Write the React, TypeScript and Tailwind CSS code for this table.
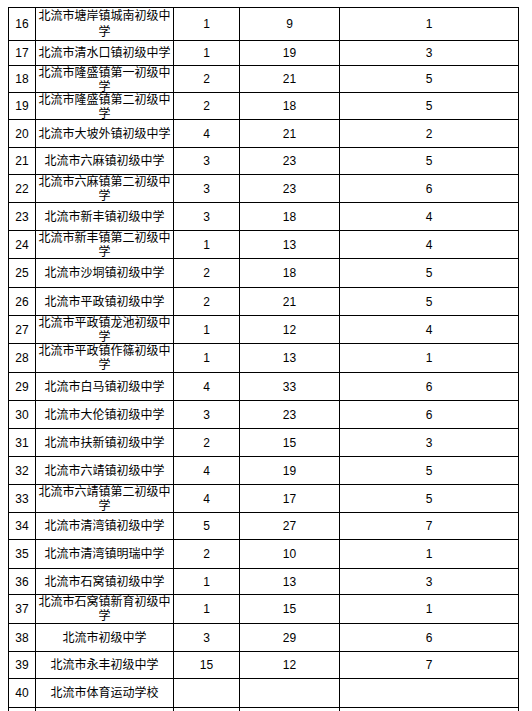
type Row = {
  no: number;
  name: string;
  a: string;
  b: string;
  c: string;
  h: number;
};

// 行高按截图里的横线位置量出来（含上边框 1px）
const ROWS: Row[] = [
  { no: 16, name: "北流市塘岸镇城南初级中学", a: "1", b: "9", c: "1", h: 33 },
  { no: 17, name: "北流市清水口镇初级中学", a: "1", b: "19", c: "3", h: 25 },
  { no: 18, name: "北流市隆盛镇第一初级中学", a: "2", b: "21", c: "5", h: 27 },
  { no: 19, name: "北流市隆盛镇第二初级中学", a: "2", b: "18", c: "5", h: 27 },
  { no: 20, name: "北流市大坡外镇初级中学", a: "4", b: "21", c: "2", h: 28 },
  { no: 21, name: "北流市六麻镇初级中学", a: "3", b: "23", c: "5", h: 27 },
  { no: 22, name: "北流市六麻镇第二初级中学", a: "3", b: "23", c: "6", h: 28 },
  { no: 23, name: "北流市新丰镇初级中学", a: "3", b: "18", c: "4", h: 28 },
  { no: 24, name: "北流市新丰镇第二初级中学", a: "1", b: "13", c: "4", h: 28 },
  { no: 25, name: "北流市沙垌镇初级中学", a: "2", b: "18", c: "5", h: 29 },
  { no: 26, name: "北流市平政镇初级中学", a: "2", b: "21", c: "5", h: 28 },
  { no: 27, name: "北流市平政镇龙池初级中学", a: "1", b: "12", c: "4", h: 28 },
  { no: 28, name: "北流市平政镇作篠初级中学", a: "1", b: "13", c: "1", h: 29 },
  { no: 29, name: "北流市白马镇初级中学", a: "4", b: "33", c: "6", h: 28 },
  { no: 30, name: "北流市大伦镇初级中学", a: "3", b: "23", c: "6", h: 28 },
  { no: 31, name: "北流市扶新镇初级中学", a: "2", b: "15", c: "3", h: 28 },
  { no: 32, name: "北流市六靖镇初级中学", a: "4", b: "19", c: "5", h: 28 },
  { no: 33, name: "北流市六靖镇第二初级中学", a: "4", b: "17", c: "5", h: 28 },
  { no: 34, name: "北流市清湾镇初级中学", a: "5", b: "27", c: "7", h: 27 },
  { no: 35, name: "北流市清湾镇明瑞中学", a: "2", b: "10", c: "1", h: 29 },
  { no: 36, name: "北流市石窝镇初级中学", a: "1", b: "13", c: "3", h: 26 },
  { no: 37, name: "北流市石窝镇新育初级中学", a: "1", b: "15", c: "1", h: 29 },
  { no: 38, name: "北流市初级中学", a: "3", b: "29", c: "6", h: 28 },
  { no: 39, name: "北流市永丰初级中学", a: "15", b: "12", c: "7", h: 27 },
  { no: 40, name: "北流市体育运动学校", a: "", b: "", c: "", h: 29 },
];

const GRID = "grid grid-cols-[27px_138px_66px_100px_179px] border-t border-l border-black";
const CELL = "flex items-center justify-center border-r border-black overflow-hidden";

function NameCell({ name, first }: { name: string; first: boolean }) {
  // 超过 11 个字会折行，Excel 里第二行字挤在格子底部
  const wraps = name.length > 11;
  if (!wraps) return <div className={CELL}>{name}</div>;
  return (
    <div className="flex items-start justify-center overflow-hidden border-r border-black">
      <div className={`w-full text-center ${first ? "leading-[16px]" : "leading-[14px]"}`}>{name}</div>
    </div>
  );
}

export default function App() {
  return (
    <div className="h-[711px] overflow-hidden bg-white pl-[8px] pt-[7px] font-['Liberation_Sans','Noto_Sans_CJK_SC',sans-serif] text-[12px] text-black">
      <div className="w-[511px]">
        {ROWS.map((r, i) => (
          <div key={r.no} className={GRID} style={{ height: r.h }}>
            <div className={CELL}>{r.no}</div>
            <NameCell name={r.name} first={i === 0} />
            <div className={CELL}>{r.a}</div>
            <div className={CELL}>{r.b}</div>
            <div className={CELL}>{r.c}</div>
          </div>
        ))}
        <div className={`${GRID} h-[20px]`}>
          <div className={CELL} />
          <div className={CELL} />
          <div className={CELL} />
          <div className={CELL} />
          <div className={CELL} />
        </div>
      </div>
    </div>
  );
}
